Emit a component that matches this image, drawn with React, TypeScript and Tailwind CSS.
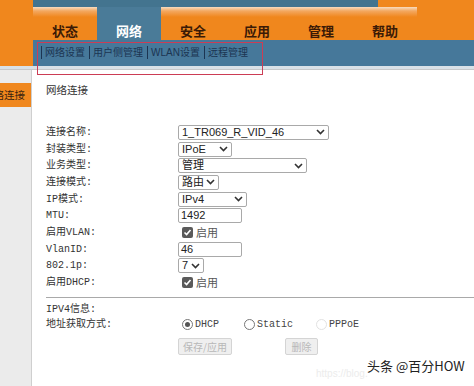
import React from "react";

const cjk = { fontFamily: '"Noto Sans CJK SC", sans-serif' };
const sans = { fontFamily: '"Liberation Sans", "Noto Sans CJK SC", sans-serif' };
const mono = { fontFamily: '"Liberation Mono", "Noto Sans CJK SC", monospace' };

const tabs = ["状态", "网络", "安全", "应用", "管理", "帮助"];
const subnav = ["网络设置", "用户侧管理", "WLAN设置", "远程管理"];

function Chevron() {
  return (
    <svg width="9" height="6" viewBox="0 0 9 6" className="shrink-0">
      <path d="M1 1 L4.5 4.5 L8 1" fill="none" stroke="#333" strokeWidth="1.6" />
    </svg>
  );
}

function Select({ w, text }: { w: string; text: string }) {
  return (
    <div
      className={`${w} h-[15px] flex items-center justify-between pl-[3px] pr-[3px] bg-white border border-[#a9a9a9] rounded-[2px] text-[11px] text-[#222] leading-none`}
      style={sans}
    >
      <span>{text}</span>
      <Chevron />
    </div>
  );
}

function Input({ text }: { text: string }) {
  return (
    <div
      className="w-[64px] h-[15px] flex items-center px-[2px] bg-white border border-[#a9a9a9] rounded-[2px] text-[11px] text-[#222] leading-none"
      style={sans}
    >
      {text}
    </div>
  );
}

function Check() {
  return (
    <div className="flex items-center gap-[3px] pl-[4px]">
      <div className="w-[11px] h-[11px] bg-[#5a5a5a] rounded-[2px] flex items-center justify-center">
        <svg width="9" height="9" viewBox="0 0 9 9">
          <path d="M1.5 4.5 L3.6 6.6 L7.5 2" fill="none" stroke="#fff" strokeWidth="1.6" />
        </svg>
      </div>
      <span className="text-[11px] text-[#555]" style={cjk}>
        启用
      </span>
    </div>
  );
}

function Radio({ label, checked, disabled }: { label: string; checked?: boolean; disabled?: boolean }) {
  return (
    <div className="flex items-center gap-[2px]">
      <div
        className={`w-[11px] h-[11px] rounded-full border flex items-center justify-center ${
          disabled ? "border-[#e2e2e2]" : "border-[#777]"
        }`}
      >
        {checked && <div className="w-[5px] h-[5px] rounded-full bg-[#555]" />}
      </div>
      <span className="text-[10px] text-[#444]" style={mono}>
        {label}
      </span>
    </div>
  );
}

const rows: { label: string; control: React.ReactNode }[] = [
  { label: "连接名称:", control: <Select w="w-[151px]" text="1_TR069_R_VID_46" /> },
  { label: "封装类型:", control: <Select w="w-[54px]" text="IPoE" /> },
  { label: "业务类型:", control: <Select w="w-[129px]" text="管理" /> },
  { label: "连接模式:", control: <Select w="w-[41px]" text="路由" /> },
  { label: "IP模式:", control: <Select w="w-[69px]" text="IPv4" /> },
  { label: "MTU:", control: <Input text="1492" /> },
  { label: "启用VLAN:", control: <Check /> },
  { label: "VlanID:", control: <Input text="46" /> },
  { label: "802.1p:", control: <Select w="w-[26px]" text="7" /> },
  { label: "启用DHCP:", control: <Check /> },
];

export default function App() {
  return (
    <div className="relative w-[474px] h-[386px] overflow-hidden bg-white">
      {/* header */}
      <div className="bg-[#f0871d]">
        <div className="flex h-[40px]">
          <div className="w-[33px]" />
          <div className="flex flex-col">
            <div className="w-[345px] h-[7px] bg-[#43748f]" />
            <div className="flex h-[33px]">
              {tabs.map((t, i) =>
                i === 1 ? (
                  <div
                    key={t}
                    className="w-[64px] flex items-end justify-center pb-0 bg-[#4a7b98] text-white text-[13px] font-bold"
                    style={cjk}
                  >
                    {t}
                  </div>
                ) : (
                  <div
                    key={t}
                    className="w-[64px] flex items-end justify-center pb-0 bg-[linear-gradient(to_bottom,#f8dcc0_0px,#f3a860_4px,#f0871d_10px,#f0871d_100%)] text-[#3b1a06] text-[13px] font-bold"
                    style={cjk}
                  >
                    {t}
                  </div>
                )
              )}
            </div>
          </div>
        </div>
        <div className="flex h-[26px]">
          <div className="w-[33px]" />
          <div className="flex-1 bg-[#46789a] flex items-center pl-[8px] pb-[1px] text-[10px] text-[#1c3552]" style={sans}>
            {subnav.map((s) => (
              <React.Fragment key={s}>
                <span className="w-px h-[13px] bg-[#1c3552] mr-[3px]" />
                <span className="mr-[4px]">{s}</span>
              </React.Fragment>
            ))}
          </div>
        </div>
      </div>
      <div className="h-[4px] bg-[#d9e1e7] border-b border-[#c6c8ca]" />

      {/* body */}
      <div className="flex h-[316px]">
        <div className="w-[32px] bg-[#ebebeb] border-r border-[#cfcfcf] pt-[13px]">
          <div className="h-[24px] bg-[#f0871d] overflow-hidden flex items-center justify-end pr-[6px]">
            <span className="whitespace-nowrap text-[10.5px] text-[#3a2410]" style={cjk}>
              网络连接
            </span>
          </div>
        </div>
        <div className="flex-1 pl-[14px] pt-[12px]">
          <div className="text-[10.5px] text-[#333] h-[15px] leading-[15px]" style={cjk}>
            网络连接
          </div>
          <div className="mt-[27px] flex flex-col">
            {rows.map((r) => (
              <div key={r.label} className="flex items-center h-[16.7px]">
                <div className="w-[132px] text-[10px] text-[#333]" style={mono}>
                  {r.label}
                </div>
                {r.control}
              </div>
            ))}
          </div>
          <div className="mt-[6px] border-t border-[#a9a9a9]" />
          <div className="mt-[4px] text-[10px] text-[#333] h-[15px] leading-[15px]" style={mono}>
            IPV4信息:
          </div>
          <div className="flex items-center h-[15px]">
            <div className="w-[136px] text-[10px] text-[#333]" style={mono}>
              地址获取方式:
            </div>
            <div className="w-[62px]">
              <Radio label="DHCP" checked />
            </div>
            <div className="w-[72px]">
              <Radio label="Static" />
            </div>
            <Radio label="PPPoE" disabled />
          </div>
          <div className="flex mt-[6px] pl-[132px]">
            <div
              className="w-[54px] h-[17px] flex items-center justify-center bg-[#efefef] border border-[#d4d4d4] rounded-[2px] text-[10px] text-[#b8b8b8]"
              style={cjk}
            >
              保存/应用
            </div>
            <div
              className="ml-[53px] w-[33px] h-[17px] flex items-center justify-center bg-[#efefef] border border-[#d4d4d4] rounded-[2px] text-[10px] text-[#b8b8b8]"
              style={cjk}
            >
              删除
            </div>
          </div>
        </div>
      </div>

      {/* highlight rectangle */}
      <div className="absolute left-[37px] top-[42px] w-[226px] h-[33px] border-[1.5px] border-[#cc3d55]" />

      {/* watermark */}
      <div className="absolute left-[316px] top-[366px] whitespace-nowrap text-[10px] text-[#ececec]" style={sans}>
        https://blog.
      </div>
      <div
        className="absolute left-[367px] top-[356px] whitespace-nowrap text-[13px] text-[#222] [text-shadow:0_0_2px_#fff]"
        style={cjk}
      >
        头条 @百分HOW
      </div>
    </div>
  );
}
